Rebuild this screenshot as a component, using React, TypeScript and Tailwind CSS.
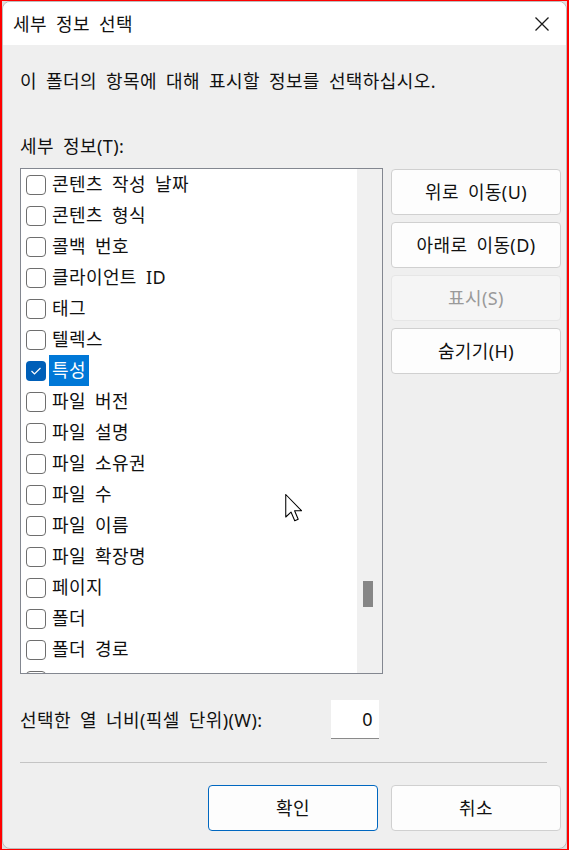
const rows = [
  "콘텐츠 작성 날짜",
  "콘텐츠 형식",
  "콜백 번호",
  "클라이언트 ID",
  "태그",
  "텔렉스",
  "특성",
  "파일 버전",
  "파일 설명",
  "파일 소유권",
  "파일 수",
  "파일 이름",
  "파일 확장명",
  "페이지",
  "폴더",
  "폴더 경로",
  "",
];

const font = { fontFamily: '"Noto Sans", "Noto Sans CJK KR", sans-serif' };

function CheckBox({ checked }: { checked?: boolean }) {
  if (checked) {
    return (
      <div className="w-[20px] h-[20px] rounded-[4px] bg-[#005fb8] flex items-center justify-center shrink-0">
        <svg width="20" height="20" viewBox="0 0 20 20">
          <polyline points="5.5,10 8.5,13 14.5,7" fill="none" stroke="white" strokeWidth="1.2" />
        </svg>
      </div>
    );
  }
  return <div className="w-[20px] h-[20px] rounded-[4px] border border-[#6e6e6e] bg-white shrink-0" />;
}

function Btn({ label, disabled, primary }: { label: string; disabled?: boolean; primary?: boolean }) {
  return (
    <div
      className={
        "w-[170px] h-[46px] rounded-[4px] border flex items-center justify-center " +
        (disabled
          ? "bg-[#f5f5f5] border-[#e6e6e6] text-[#9a9a9a]"
          : primary
          ? "bg-[#fdfdfd] border-[#0067c0] text-[#111]"
          : "bg-[#fdfdfd] border-[#d0d0d0] text-[#111]")
      }
    >
      {label}
    </div>
  );
}

export default function App() {
  return (
    <div className="w-[569px] h-[850px] bg-[#ff0000] pt-[1px] pl-[2px] pr-[2px] pb-[1px]" style={font}>
      <div className="w-full h-full bg-[#dedede]">
        <div className="relative w-full h-full rounded-[8px] border border-[#bcbcbc] overflow-hidden bg-[#efefef] text-[18px] text-[#111] tracking-[0.4px] [word-spacing:4px]">
          {/* title bar */}
          <div className="h-[43px] bg-white flex items-center justify-between pl-[10px] pr-[16px]">
            <span className="leading-[24px]">세부 정보 선택</span>
            <svg width="16" height="16" viewBox="0 0 16 16">
              <path d="M1.5 1.5 L14.5 14.5 M14.5 1.5 L1.5 14.5" stroke="#1a1a1a" strokeWidth="1.3" />
            </svg>
          </div>

          <div className="pl-[17px] pr-[5px]">
            <div className="mt-[24px] h-[24px] leading-[24px]">이 폴더의 항목에 대해 표시할 정보를 선택하십시오.</div>
            <div className="mt-[41px] h-[24px] leading-[24px]">세부 정보(T):</div>

            <div className="mt-[10px] flex gap-[8px]">
              {/* list */}
              <div className="w-[363px] h-[506px] border border-[#838790] bg-white flex overflow-hidden">
                <div className="flex-1 overflow-hidden">
                  {rows.map((r, i) => (
                    <div key={i} className="h-[31px] flex items-center pl-[5px]">
                      <CheckBox checked={i === 6} />
                      {r && (
                        <span
                          className={
                            "ml-[3px] px-[3px] leading-[31px] whitespace-nowrap " +
                            (i === 6 ? "bg-[#0078d7] text-white" : "")
                          }
                        >
                          {r}
                        </span>
                      )}
                    </div>
                  ))}
                </div>
                <div className="w-[25px] bg-[#f0f0f0] relative">
                  <div className="absolute left-[6px] top-[412px] w-[10px] h-[26px] bg-[#868686]" />
                </div>
              </div>

              {/* buttons */}
              <div className="pt-[1px] flex flex-col gap-[7px]">
                <Btn label="위로 이동(U)" />
                <Btn label="아래로 이동(D)" />
                <Btn label="표시(S)" disabled />
                <Btn label="숨기기(H)" />
              </div>
            </div>

            <div className="mt-[26px] flex items-center">
              <div className="w-[311px] leading-[24px] whitespace-nowrap">선택한 열 너비(픽셀 단위)(W):</div>
              <div className="w-[48px] h-[39px] bg-white border-b border-[#8a8a8a] flex items-center justify-end pr-[6px]">
                0
              </div>
            </div>

            <div className="mt-[23px] w-[527px] h-[1px] bg-[#c4c4c4]" />

            <div className="mt-[22px] flex justify-end gap-[13px]">
              <Btn label="확인" primary />
              <Btn label="취소" />
            </div>
          </div>

          {/* mouse pointer */}
          <svg className="absolute left-[281px] top-[491px]" width="20" height="30" viewBox="0 0 13 20">
            <path
              d="M1 1 L1 16 L4.5 12.7 L7 18.5 L9.3 17.5 L6.9 11.8 L11.5 11.8 Z"
              fill="white"
              stroke="black"
              strokeWidth="0.7"
              strokeLinejoin="round"
            />
          </svg>
        </div>
      </div>
    </div>
  );
}
